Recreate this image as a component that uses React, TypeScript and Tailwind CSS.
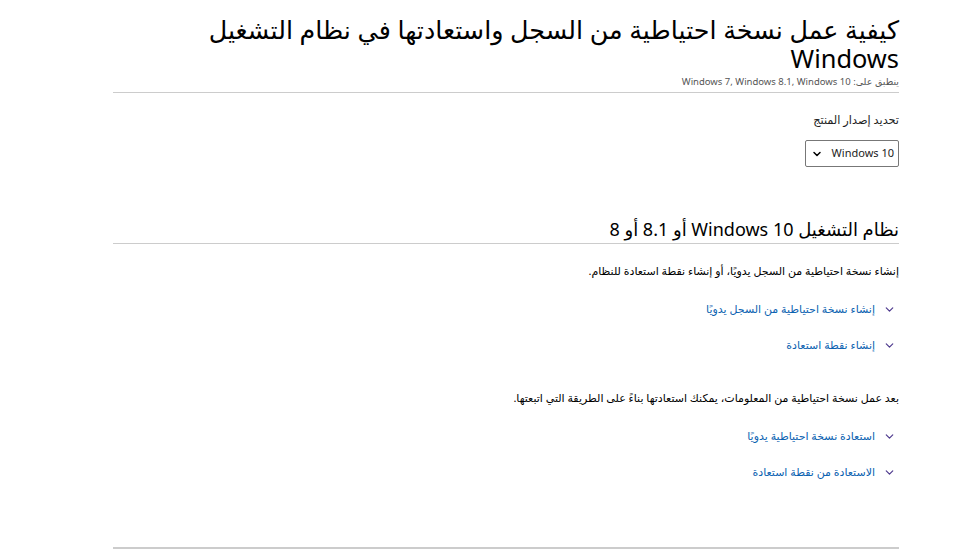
import { ChevronDown } from "lucide-react";

const FONT = { fontFamily: '"Noto Sans", "DejaVu Sans", sans-serif' };

function Expander({ label }: { label: string }) {
  return (
    <div className="flex items-center gap-[8px] pr-[3px] h-[36px]">
      <ChevronDown className="h-[13px] w-[13px] text-[#4e3a8e]" strokeWidth={2.2} />
      <span className="text-[11px] text-[#0b62b1]">{label}</span>
    </div>
  );
}

export default function App() {
  return (
    <div dir="rtl" style={FONT} className="min-h-[558px] bg-white text-black">
      <div className="mr-[68px] w-[786px] pt-[15px]">
        <h1 className="text-[25.4px] leading-[29px] font-normal">
          كيفية عمل نسخة احتياطية من السجل واستعادتها في نظام التشغيل Windows
        </h1>
        <p className="mt-[2px] text-[9.5px] text-[#555]">
          ينطبق على: Windows 7, Windows 8.1, Windows 10
        </p>
        <div className="mt-[3px] border-b border-[#ccc]" />

        <p className="mt-[19px] text-[11.3px] text-[#222]">تحديد إصدار المنتج</p>
        <div className="mt-[11px] flex h-[27px] w-[94px] items-center justify-between rounded-[2px] border border-[#777] pl-[5px] pr-[4px]">
          <span className="text-[11px] text-[#222]">Windows 10</span>
          <ChevronDown className="h-[12px] w-[12px]" strokeWidth={3} />
        </div>

        <h2 className="mt-[50px] text-[18px] leading-[25px] font-normal">
          نظام التشغيل Windows 10 أو 8.1 أو 8
        </h2>
        <div className="mt-[1px] border-b border-[#ccc]" />

        <p className="mt-[19px] text-[11px] text-black">
          إنشاء نسخة احتياطية من السجل يدويًا، أو إنشاء نقطة استعادة للنظام.
        </p>
        <div className="mt-[12px] flex flex-col">
          <Expander label="إنشاء نسخة احتياطية من السجل يدويًا" />
          <Expander label="إنشاء نقطة استعادة" />
        </div>

        <p className="mt-[26px] text-[11px] text-black">
          بعد عمل نسخة احتياطية من المعلومات، يمكنك استعادتها بناءً على الطريقة التي اتبعتها.
        </p>
        <div className="mt-[12px] flex flex-col">
          <Expander label="استعادة نسخة احتياطية يدويًا" />
          <Expander label="الاستعادة من نقطة استعادة" />
        </div>

        <div className="mt-[57px] border-b-2 border-[#ccc]" />
      </div>
    </div>
  );
}
